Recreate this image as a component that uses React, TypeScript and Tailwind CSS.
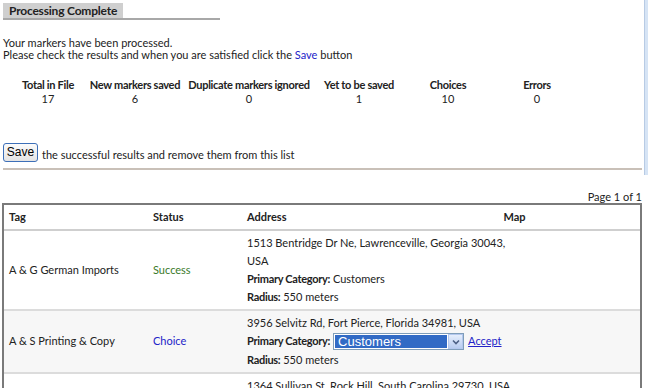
import React from "react";

const font = { fontFamily: "Lato, 'Open Sans', sans-serif" };

function Stat({ label, value, w }: { label: string; value: string; w: string }) {
  return (
    <div className={`${w} shrink-0 flex flex-col items-center whitespace-nowrap`}>
      <div className="font-bold text-[11px] leading-[14px] tracking-[-0.3px] text-[#222]">{label}</div>
      <div className="text-[11px] leading-[14px] text-[#222]">{value}</div>
    </div>
  );
}

export default function App() {
  return (
    <div className="w-[648px] h-[388px] overflow-hidden bg-white relative text-[#222]" style={font}>
      <div className="absolute right-0 top-0 w-[4px] h-[175px] bg-[#d6e4f5] border-l border-[#b8cbe4]" />
      <div className="pl-[3px] pr-[6px] pt-[3px]">
        <div className="w-[217px] border-b-2 border-[#a8a8a8] flex">
          <div className="bg-[#cfcfcf] px-[6px] h-[15px] leading-[15px] font-bold text-[12px] tracking-[-0.2px] text-[#222]">
            Processing Complete
          </div>
        </div>
        <div className="mt-[17px] text-[11px] leading-[12px]">
          <div>Your markers have been processed.</div>
          <div>
            Please check the results and when you are satisfied click the{" "}
            <span className="text-[#2323c8]">Save</span> button
          </div>
        </div>
        <div className="flex mt-[17px] -ml-[3px]">
          <Stat w="w-[96px]" label="Total in File" value="17" />
          <Stat w="w-[78px]" label="New markers saved" value="6" />
          <Stat w="w-[150px]" label="Duplicate markers ignored" value="0" />
          <Stat w="w-[70px]" label="Yet to be saved" value="1" />
          <Stat w="w-[108px]" label="Choices" value="10" />
          <Stat w="w-[70px]" label="Errors" value="0" />
        </div>
        <div className="flex items-end mt-[37px]">
          <button
            className="h-[19px] w-[35px] border border-[#3d6fb8] rounded-[3px] bg-gradient-to-b from-[#fbfbfb] to-[#e4e4e4] text-[12px] leading-[15px] text-black"
            style={{ fontFamily: "'Liberation Sans', Arial, sans-serif" }}
          >
            Save
          </button>
          <span className="ml-[4px] text-[11px] leading-[12px] mb-[1px]">
            the successful results and remove them from this list
          </span>
        </div>
        <div className="mt-[6px] h-[2px] bg-[#c9c0b8]" />
        <div className="mt-[21px] text-right text-[11px] leading-[12px]">Page 1 of 1</div>
        <div className="border-2 border-[#7a7a7a] -ml-[1px]">
          <div className="flex h-[26px] items-center border-b-2 border-[#cfcfcf] text-[11px] font-bold">
            <div className="w-[147px] shrink-0 pl-[5px]">Tag</div>
            <div className="w-[96px] shrink-0 pl-[2px]">Status</div>
            <div className="w-[142px] shrink-0">Address</div>
            <div className="flex-1 text-center">Map</div>
          </div>
          <div className="flex items-center h-[80px] border-b-2 border-[#dcdcdc] text-[11px] bg-white">
            <div className="w-[147px] shrink-0 pl-[5px]">A &amp; G German Imports</div>
            <div className="w-[96px] shrink-0 pl-[2px] text-[#3a7a2a]">Success</div>
            <div className="w-[270px] leading-[18px]">
              <div>1513 Bentridge Dr Ne, Lawrenceville, Georgia 30043,</div>
              <div>USA</div>
              <div>
                <span className="font-bold tracking-[-0.3px]">Primary Category:</span> Customers
              </div>
              <div>
                <span className="font-bold tracking-[-0.3px]">Radius:</span> 550 meters
              </div>
            </div>
          </div>
          <div className="flex items-center h-[63px] border-b-2 border-[#dcdcdc] text-[11px] bg-[#f7f7f7]">
            <div className="w-[147px] shrink-0 pl-[5px]">A &amp; S Printing &amp; Copy</div>
            <div className="w-[96px] shrink-0 pl-[2px] text-[#2323c8]">Choice</div>
            <div className="w-[300px]">
              <div className="leading-[16px]">3956 Selvitz Rd, Fort Pierce, Florida 34981, USA</div>
              <div className="flex items-center h-[21px]">
                <span className="font-bold tracking-[-0.3px]">Primary Category:</span>
                <div className="ml-[3px] flex h-[17px] w-[131px] border border-[#7f9db9] bg-white">
                  <div
                    className="flex-1 bg-[#316ac5] text-white text-[13px] leading-[13px] pl-[3px] m-[1px]"
                    style={{ fontFamily: "'Liberation Sans', Arial, sans-serif" }}
                  >
                    Customers
                  </div>
                  <div className="w-[15px] bg-gradient-to-b from-[#e6eefc] to-[#b9cdf0] border border-[#b4c8ee] flex items-center justify-center">
                    <svg width="8" height="6" viewBox="0 0 8 6">
                      <path d="M1 1.5 L4 4.5 L7 1.5" stroke="#4d6185" strokeWidth="1.6" fill="none" />
                    </svg>
                  </div>
                </div>
                <a className="ml-[4px] text-[#2323c8] underline">Accept</a>
              </div>
              <div className="leading-[16px]">
                <span className="font-bold tracking-[-0.3px]">Radius:</span> 550 meters
              </div>
            </div>
          </div>
          <div className="flex h-[40px] text-[11px] bg-white">
            <div className="w-[147px] shrink-0" />
            <div className="w-[96px] shrink-0" />
            <div className="pt-[4px] leading-[16px]">1364 Sullivan St, Rock Hill, South Carolina 29730, USA</div>
          </div>
        </div>
      </div>
    </div>
  );
}
